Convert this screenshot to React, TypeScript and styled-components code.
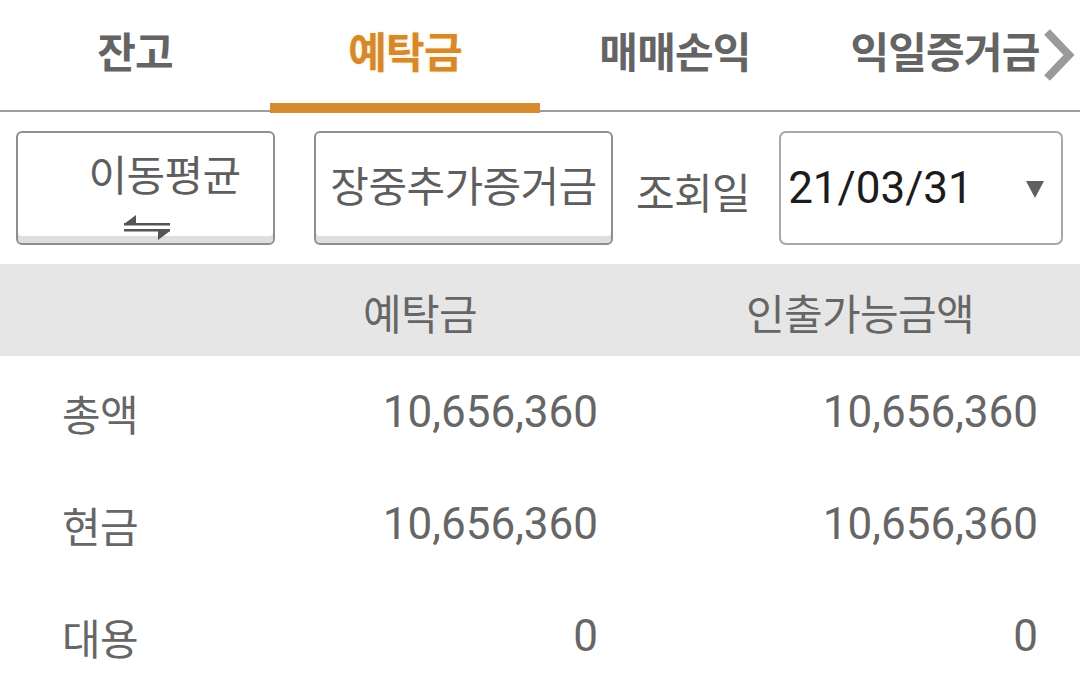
import React from "react";
import styled, { createGlobalStyle } from "styled-components";

const GlobalStyle = createGlobalStyle`
  html, body {
    margin: 0;
    padding: 0;
    background: #ffffff;
  }
  body {
    font-family: Roboto, "Noto Sans CJK KR", sans-serif;
    color: #666666;
  }
  * { box-sizing: border-box; }
`;

const Page = styled.div`
  width: 1080px;
  height: 691px;
  overflow: hidden;
  background: #ffffff;
`;

const TabBar = styled.nav`
  position: relative;
  display: grid;
  grid-template-columns: repeat(4, 1fr);
  height: 112px;
  border-bottom: 2px solid #9c9c9c;
`;

const Tab = styled.div<{ $active?: boolean }>`
  position: relative;
  display: flex;
  align-items: center;
  justify-content: center;
  padding-bottom: 12px;
  font-size: 42px;
  font-weight: 700;
  letter-spacing: -0.8px;
  color: ${(p) => (p.$active ? "#d4892c" : "#646464")};
  text-shadow: ${(p) => (p.$active ? "0 0 3px rgba(255, 200, 90, 0.6)" : "none")};

  &::after {
    content: "";
    display: ${(p) => (p.$active ? "block" : "none")};
    position: absolute;
    left: 0;
    right: 0;
    bottom: -3px;
    height: 10px;
    background: #d68b30;
  }
`;

const Chevron = styled.svg`
  position: absolute;
  right: 4px;
  top: 28px;
  width: 34px;
  height: 54px;
`;

const Controls = styled.div`
  display: flex;
  align-items: center;
  padding: 19px 17px 0 16px;
  height: 133px;
`;

const ActionButton = styled.div<{ $width: number }>`
  width: ${(p) => p.$width}px;
  height: 114px;
  border: 2px solid #8f8f8f;
  border-radius: 6px;
  box-shadow: inset 0 -7px 0 #dedede;
  display: flex;
  flex-direction: column;
  align-items: center;
  justify-content: center;
  font-size: 42px;
  letter-spacing: -0.6px;
  color: #5e5e5e;
`;

const MovingAvgButton = styled(ActionButton)`
  justify-content: flex-start;
  padding: 14px 0 0 38px;
  margin-right: 39px;
`;

const ButtonLabel = styled.span`
  line-height: 60px;
`;

const SwapIcon = styled.svg`
  width: 50px;
  height: 26px;
  margin-top: 8px;
  margin-left: -36px;
`;

const DateLabel = styled.span`
  margin-left: 23px;
  margin-right: 29px;
  font-size: 42px;
  letter-spacing: -0.6px;
  color: #5e5e5e;
  padding-top: 4px;
`;

const DateSelect = styled.div`
  flex: 1;
  height: 114px;
  border: 2px solid #a8a8a8;
  border-radius: 7px;
  display: flex;
  align-items: center;
  justify-content: space-between;
  padding: 0 17px 0 7px;
  font-size: 44px;
  color: #1c1c1c;
`;

const Caret = styled.span`
  width: 0;
  height: 0;
  border-left: 9px solid transparent;
  border-right: 9px solid transparent;
  border-top: 17px solid #5f5f5f;
  margin-top: 2px;
`;

const Table = styled.div`
  margin-top: 19px;
  display: grid;
  grid-template-columns: 240px 360px 1fr;
`;

const HeadCell = styled.div<{ $offset?: number }>`
  height: 92px;
  background: #e6e6e6;
  display: flex;
  align-items: center;
  justify-content: center;
  padding-left: ${(p) => p.$offset ?? 0}px;
  padding-top: 2px;
  font-size: 42px;
  letter-spacing: -0.6px;
  color: #666666;
`;

const LabelCell = styled.div`
  height: 112px;
  display: flex;
  align-items: center;
  padding-left: 62px;
  font-size: 42px;
  letter-spacing: -0.6px;
  color: #666666;
`;

const ValueCell = styled.div<{ $pad: number }>`
  height: 112px;
  display: flex;
  align-items: center;
  justify-content: flex-end;
  padding-right: ${(p) => p.$pad}px;
  font-size: 44px;
  color: #666666;
`;

const rows = [
  { label: "총액", deposit: "10,656,360", withdraw: "10,656,360" },
  { label: "현금", deposit: "10,656,360", withdraw: "10,656,360" },
  { label: "대용", deposit: "0", withdraw: "0" },
];

export default function App() {
  return (
    <Page>
      <GlobalStyle />
      <TabBar>
        <Tab>잔고</Tab>
        <Tab $active>예탁금</Tab>
        <Tab>매매손익</Tab>
        <Tab>익일증거금</Tab>
        <Chevron viewBox="0 0 34 54">
          <polyline
            points="5,4 27,27 5,50"
            fill="none"
            stroke="#9a9a9a"
            strokeWidth="8"
            strokeLinejoin="miter"
          />
        </Chevron>
      </TabBar>

      <Controls>
        <MovingAvgButton $width={259}>
          <ButtonLabel>이동평균</ButtonLabel>
          <SwapIcon viewBox="0 0 50 26">
            <polygon points="2,9 14,0 14,9" fill="#555" />
            <rect x="2" y="8" width="46" height="2.5" fill="#555" />
            <rect x="2" y="14" width="46" height="2.5" fill="#555" />
            <polygon points="36,16 48,16 36,25" fill="#555" />
          </SwapIcon>
        </MovingAvgButton>
        <ActionButton $width={299}>
          <ButtonLabel>장중추가증거금</ButtonLabel>
        </ActionButton>
        <DateLabel>조회일</DateLabel>
        <DateSelect>
          <span>21/03/31</span>
          <Caret />
        </DateSelect>
      </Controls>

      <Table>
        <HeadCell />
        <HeadCell>예탁금</HeadCell>
        <HeadCell $offset={40}>인출가능금액</HeadCell>
        {rows.map((r) => (
          <React.Fragment key={r.label}>
            <LabelCell>{r.label}</LabelCell>
            <ValueCell $pad={2}>{r.deposit}</ValueCell>
            <ValueCell $pad={42}>{r.withdraw}</ValueCell>
          </React.Fragment>
        ))}
      </Table>
    </Page>
  );
}
